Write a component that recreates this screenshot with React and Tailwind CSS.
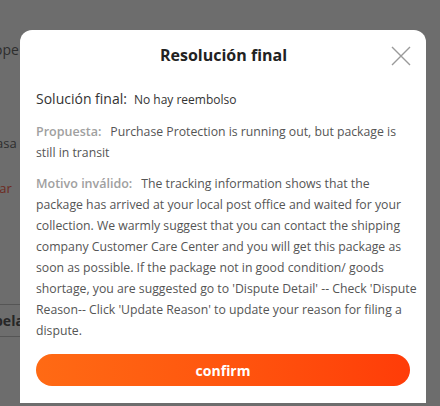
import React from 'react';

const font = { fontFamily: '"Open Sans", "Liberation Sans", sans-serif' };

// dimmed page peeking out from behind the overlay
const BackdropPage = () => (
  <div className="h-full bg-[#6d6d6d]">
    <div className="flex flex-col pt-[41px] ml-[-6px] w-[36px] text-[13px] leading-[18px] text-[#2e2e2e]">
      <p className="text-[14px]">ope</p>
      <p className="mt-[75px] pl-[2px]">asa</p>
      <p className="mt-[27px] pl-[2px] text-[#6e2a22]">lar</p>
      <div className="mt-[107px] h-[33px] border-y border-[#555] flex items-center">
        <span className="text-[14px] font-bold text-[#262626]">bela</span>
      </div>
    </div>
  </div>
);

const CloseIcon = () => (
  <svg width="20" height="20" viewBox="0 0 20 20" fill="none">
    <path d="M1 1L19 19M19 1L1 19" stroke="#9a9a9a" strokeWidth="1.4" />
  </svg>
);

// lines are broken where the original dialog breaks them
const Row = ({ label, lines }) => (
  <p className="text-[12.25px] leading-[21px] text-[#555] whitespace-nowrap">
    <span className="text-[12.5px] font-semibold text-[#a0a0a0]">{label}</span>
    <span className="ml-[9px]">
      {lines.map((line, i) => (
        <React.Fragment key={i}>
          {i > 0 && <br />}
          {line}
        </React.Fragment>
      ))}
    </span>
  </p>
);

const proposal = [
  'Purchase Protection is running out, but package is',
  'still in transit',
];

const reason = [
  'The tracking information shows that the',
  'package has arrived at your local post office and waited for your',
  'collection. We warmly suggest that you can contact the shipping',
  'company Customer Care Center and you will get this package as',
  'soon as possible. If the package not in good condition/ goods',
  "shortage, you are suggested go to 'Dispute Detail' -- Check 'Dispute",
  "Reason-- Click 'Update Reason' to update your reason for filing a",
  'dispute.',
];

export default function App() {
  return (
    <div className="relative w-[440px] h-[406px] overflow-hidden" style={font}>
      <BackdropPage />

      {/* modal */}
      <div className="absolute left-[20px] top-[30px] w-[406px] h-[373px] bg-white rounded-t-[12px] px-4 flex flex-col">
        <div className="flex items-center pt-[13px]">
          <div className="w-[20px]" />
          <h2 className="flex-1 text-center text-[16px] leading-[24px] font-bold text-[#222]">
            Resolución final
          </h2>
          <button className="mr-[-1px] mt-[2px]">
            <CloseIcon />
          </button>
        </div>

        <p className="mt-[19px] leading-[24px] text-[#333]">
          <span className="text-[14px]">Solución final:</span>
          <span className="ml-[7px] text-[12px]">No hay reembolso</span>
        </p>

        <div className="mt-[9px]">
          <Row label="Propuesta:" lines={proposal} />
        </div>

        <div className="mt-[10px]">
          <Row label="Motivo inválido:" lines={reason} />
        </div>

        <button className="mt-[13px] w-full h-[32px] rounded-full bg-gradient-to-r from-[#ff6a14] to-[#ff3c08] text-white text-[14px] font-bold">
          confirm
        </button>
      </div>
    </div>
  );
}
